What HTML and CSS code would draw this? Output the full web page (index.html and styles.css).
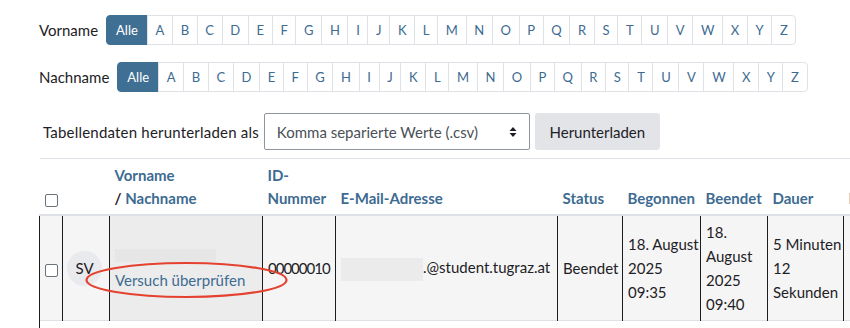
FILE: index.html
```html
<!DOCTYPE html>
<html lang="de">
<head>
<meta charset="utf-8">
<title>Versuche</title>
<link rel="stylesheet" href="styles.css">
</head>
<body>
<div class="page">
  <div class="initials">
    <span class="initials-label">Vorname</span>
    <ul class="pagination">
      <li class="active"><a class="page-link">Alle</a></li>
      <li><a class="page-link">A</a></li><li><a class="page-link">B</a></li><li><a class="page-link">C</a></li><li><a class="page-link">D</a></li><li><a class="page-link">E</a></li><li><a class="page-link">F</a></li><li><a class="page-link">G</a></li><li><a class="page-link">H</a></li><li><a class="page-link">I</a></li><li><a class="page-link">J</a></li><li><a class="page-link">K</a></li><li><a class="page-link">L</a></li><li><a class="page-link">M</a></li><li><a class="page-link">N</a></li><li><a class="page-link">O</a></li><li><a class="page-link">P</a></li><li><a class="page-link">Q</a></li><li><a class="page-link">R</a></li><li><a class="page-link">S</a></li><li><a class="page-link">T</a></li><li><a class="page-link">U</a></li><li><a class="page-link">V</a></li><li><a class="page-link">W</a></li><li><a class="page-link">X</a></li><li><a class="page-link">Y</a></li><li><a class="page-link">Z</a></li>
    </ul>
  </div>
  <div class="initials initials-last">
    <span class="initials-label">Nachname</span>
    <ul class="pagination">
      <li class="active"><a class="page-link">Alle</a></li>
      <li><a class="page-link">A</a></li><li><a class="page-link">B</a></li><li><a class="page-link">C</a></li><li><a class="page-link">D</a></li><li><a class="page-link">E</a></li><li><a class="page-link">F</a></li><li><a class="page-link">G</a></li><li><a class="page-link">H</a></li><li><a class="page-link">I</a></li><li><a class="page-link">J</a></li><li><a class="page-link">K</a></li><li><a class="page-link">L</a></li><li><a class="page-link">M</a></li><li><a class="page-link">N</a></li><li><a class="page-link">O</a></li><li><a class="page-link">P</a></li><li><a class="page-link">Q</a></li><li><a class="page-link">R</a></li><li><a class="page-link">S</a></li><li><a class="page-link">T</a></li><li><a class="page-link">U</a></li><li><a class="page-link">V</a></li><li><a class="page-link">W</a></li><li><a class="page-link">X</a></li><li><a class="page-link">Y</a></li><li><a class="page-link">Z</a></li>
    </ul>
  </div>

  <form class="download">
    <label class="download-label">Tabellendaten herunterladen als</label>
    <div class="select">
      <span>Komma separierte Werte (.csv)</span>
      <svg class="select-arrow" width="8" height="12" viewBox="0 0 8 12"><path d="M4 1 L7.5 5 H0.5 Z M4 11 L7.5 7 H0.5 Z" fill="#1d2125"/></svg>
    </div>
    <button type="button" class="btn">Herunterladen</button>
  </form>

  <div class="table-wrap">
    <table class="attempts">
      <colgroup>
        <col class="c-check"><col class="c-pic"><col class="c-name"><col class="c-id"><col class="c-mail"><col class="c-status"><col class="c-start"><col class="c-end"><col class="c-dur"><col class="c-more">
      </colgroup>
      <thead>
        <tr>
          <th class="th-check"><span class="checkbox"></span></th>
          <th></th>
          <th><a>Vorname</a><br><span class="slash">/</span> <a>Nachname</a></th>
          <th><a>ID-<br>Nummer</a></th>
          <th><a>E-Mail-Adresse</a></th>
          <th><a>Status</a></th>
          <th><a>Begonnen</a></th>
          <th><a>Beendet</a></th>
          <th><a>Dauer</a></th>
          <th><a>Bewertung/10,00</a></th>
        </tr>
      </thead>
      <tbody>
        <tr class="row">
          <td class="td-check"><span class="checkbox"></span></td>
          <td class="td-pic"><span class="avatar">SV</span></td>
          <td class="td-name">
            <div class="blur-name"></div>
            <a class="review">Versuch überprüfen</a>
          </td>
          <td class="td-id">00000010</td>
          <td class="nowrap"><span class="blur-mail"></span>.@student.tugraz.at</td>
          <td>Beendet</td>
          <td>18. August<br>2025<br>09:35</td>
          <td>18.<br>August<br>2025<br>09:40</td>
          <td>5 Minuten<br>12<br>Sekunden</td>
          <td class="more"><a>10,00</a></td>
        </tr>
        <tr class="next">
          <td class="td-next"></td><td></td><td></td><td></td><td></td><td></td><td></td><td></td><td></td><td></td>
        </tr>
      </tbody>
    </table>
    <svg class="mark" width="205" height="40" viewBox="0 0 205 40"><ellipse cx="102.5" cy="19" rx="100" ry="17" fill="none" stroke="#e4412f" stroke-width="2.2"/></svg>
  </div>
</div>
</body>
</html>
```

FILE: styles.css
```css
html, body {
  margin: 0;
  padding: 0;
}
body {
  font-family: Lato, "Open Sans", sans-serif;
  font-size: 15px;
  color: #1d2125;
  background: #fff;
  overflow: hidden;
}
.page {
  padding: 15px 0 0 39px;
}
.initials {
  display: flex;
  align-items: center;
  margin-bottom: 17px;
}
.initials-last {
  margin-bottom: 21px;
}
.initials-label {
  margin-right: 8px;
  line-height: 22px;
}
.pagination {
  display: flex;
  list-style: none;
  margin: 0;
  padding: 0;
}
.page-link {
  display: block;
  padding: 4px 7.67px;
  margin-left: -1px;
  font-size: 13px;
  line-height: 20px;
  color: #3d6b91;
  border: 1px solid #dee2e6;
  background: #fff;
}
.pagination li:first-child .page-link {
  margin-left: 0;
  border-radius: 4px 0 0 4px;
}
.pagination li:last-child .page-link {
  border-radius: 0 4px 4px 0;
}
.pagination .active .page-link {
  background: #3f6f93;
  border-color: #3f6f93;
  color: #fff;
  padding: 4px 9px;
}
.download {
  display: flex;
  align-items: center;
  margin: 0 0 8px 4px;
}
.download-label {
  margin-right: 5px;
  letter-spacing: 0.2px;
}
.select {
  box-sizing: border-box;
  width: 266px;
  height: 37px;
  display: flex;
  align-items: center;
  justify-content: space-between;
  padding: 0 12px 0 12px;
  border: 1px solid #8f959e;
  border-radius: 2px;
  color: #495057;
}
.select-arrow {
  display: block;
}
.btn {
  box-sizing: border-box;
  margin-left: 5px;
  width: 125px;
  height: 37px;
  border: 0;
  border-radius: 3px;
  background: #e2e4e8;
  font-family: inherit;
  font-size: 15px;
  color: #1d2125;
  padding: 0;
}
.table-wrap {
  position: relative;
}
.attempts {
  border-collapse: collapse;
  table-layout: fixed;
  width: 904px;
}
.c-check { width: 23px; }
.c-pic { width: 47px; }
.c-name { width: 153px; }
.c-id { width: 73px; }
.c-mail { width: 222px; }
.c-status { width: 65px; }
.c-start { width: 78px; }
.c-end { width: 67px; }
.c-dur { width: 76px; }
.c-more { width: 100px; }
.attempts thead tr {
  border-top: 1px solid #dee2e6;
  border-bottom: 2px solid #dee2e6;
}
.attempts th {
  text-align: left;
  vertical-align: bottom;
  font-weight: 700;
  line-height: 23px;
  padding: 5px 5px 4px 5px;
  white-space: nowrap;
  overflow: hidden;
}
.attempts th a {
  color: #3d6b91;
}
.slash {
  color: #1d2125;
}
.checkbox {
  display: inline-block;
  box-sizing: border-box;
  width: 13px;
  height: 13px;
  border: 1px solid #6a737b;
  border-radius: 2px;
  background: #fff;
  vertical-align: middle;
}
.th-check, .td-check {
  padding-left: 5px !important;
  padding-right: 0 !important;
}
.row {
  background: #f5f5f5;
  border-bottom: 1px solid #dee2e6;
}
.attempts td {
  vertical-align: middle;
  line-height: 24px;
  padding: 4px 5px;
  border-left: 1px solid #1d1d1d;
  white-space: nowrap;
  overflow: hidden;
}
.row td:first-child {
  border-left: 1px solid #1d1d1d;
}
.td-pic {
  padding: 0 !important;
}
.avatar {
  display: flex;
  align-items: center;
  justify-content: center;
  width: 35px;
  height: 35px;
  margin-left: 4px;
  border-radius: 50%;
  background: #e8eaee;
  font-size: 15px;
  color: #1d2125;
}
.td-name {
  background: #ececec;
  padding-top: 8px !important;
}
.blur-name {
  width: 101px;
  height: 13px;
  background: #e6e6e6;
  margin-bottom: 6px;
}
.review {
  color: #3d6b91;
}
.td-id {
  letter-spacing: -1px;
}
.blur-mail {
  display: inline-block;
  width: 82px;
  height: 23px;
  background: #ebebeb;
  vertical-align: middle;
}
.more a {
  color: #3d6b91;
}
.next td {
  border-left: 0;
  height: 20px;
  padding: 0;
}
.next .td-next {
  border-left: 1px solid #1d1d1d;
}
.mark {
  position: absolute;
  left: 45px;
  top: 103px;
}
```
